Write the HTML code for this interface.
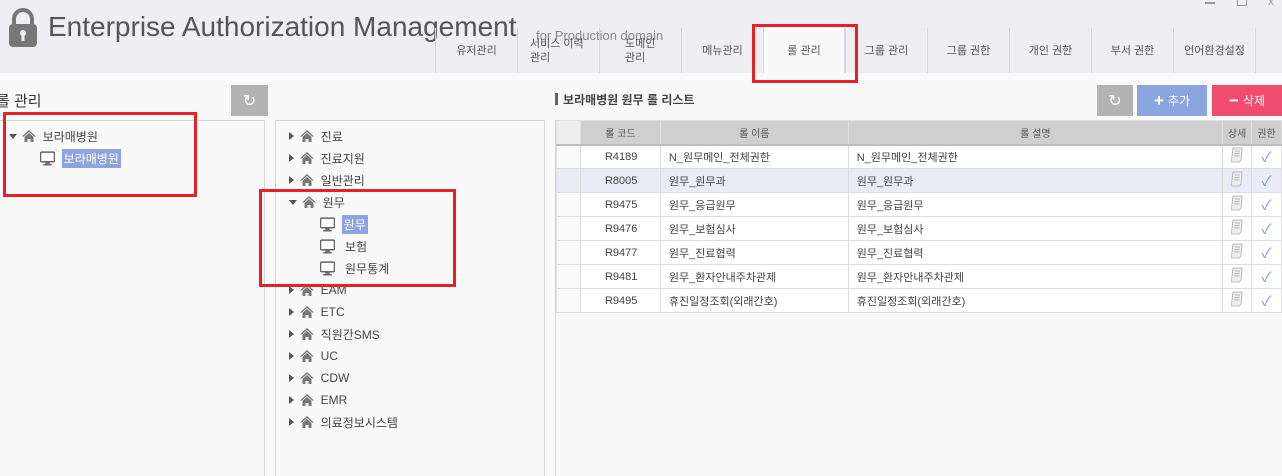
<!DOCTYPE html>
<html><head><meta charset="utf-8"><style>
*{box-sizing:border-box;margin:0;padding:0}
body{width:1282px;height:476px;overflow:hidden;background:#f9f9f9;font-family:"Liberation Sans","Noto Sans CJK KR",sans-serif;color:#333;position:relative;font-size:12px}
.abs{position:absolute}
#hdr{left:0;top:0;width:1282px;height:73px;background:#efeef2}
.title{left:48px;top:11px;font-size:28px;color:#555;white-space:nowrap;transform:scaleX(1.0);transform-origin:left}
.sub{left:536px;top:28px;font-size:13px;color:#888;white-space:nowrap}
.tab{top:28px;height:45px;width:82px;border-left:1px solid #d8d8dc;font-size:11px;color:#555;display:flex;align-items:center;justify-content:center;text-align:center;line-height:14px}
.red{border:3px solid #e8202a}
.btn{height:31px;color:#fff;font-size:12px;display:flex;align-items:center;justify-content:center}
.vline{background:#d5d5d5;width:1px}
.tree{font-size:12px;color:#444;white-space:nowrap;height:20px;display:flex;align-items:center}
.tri{display:inline-block;width:0;height:0;border-left:5px solid #555;border-top:4px solid transparent;border-bottom:4px solid transparent;margin-right:6px}
.trid{display:inline-block;width:0;height:0;border-top:5px solid #555;border-left:4px solid transparent;border-right:4px solid transparent;margin-right:5px}
.sel{background:#8fa3e2;color:#fff;padding:1px 2px}
table{border-collapse:collapse;font-size:11px;color:#444}
td,th{height:24px;border:1px solid #ddd;white-space:nowrap}
th{background:#cfcfcf;font-weight:normal;color:#555;border-color:#e0e0e0;border-bottom:2px solid #bdbdbd;font-size:10px}
td{background:#fff;padding-left:8px}
tr.hl td{background:#e9ebf6}
.ck{color:#7a94e0;text-align:center;padding:0;font-size:14px}
.doc{padding:0;text-align:center}
</style></head><body>
<div id="hdr" class="abs"></div>
<svg class="abs" style="left:8px;top:8px" width="30" height="40" viewBox="0 0 30 40"><path d="M6 17 V11 A9 9 0 0 1 24 11 V17" fill="none" stroke="#777" stroke-width="4"/><rect x="1" y="16" width="28" height="23" rx="4" fill="#777"/><circle cx="15" cy="25" r="3" fill="#efeef2"/><rect x="13.5" y="26" width="3" height="7" fill="#efeef2"/></svg>
<div class="abs title">Enterprise Authorization Management</div>
<div class="abs sub">for Production domain</div>
<div class="abs" style="left:1205px;top:0;width:10px;height:4px;border-bottom:2px solid #999"></div>
<div class="abs" style="left:1237px;top:-4px;width:10px;height:10px;border:1px solid #999"></div>
<div class="abs" style="left:1268px;top:-6px;color:#999;font-size:12px">x</div>
<div class="abs tab" style="left:435px">유저관리</div>
<div class="abs tab" style="left:517px;justify-content:flex-start;padding-left:12px;text-align:left">서비스 이력<br>관리</div>
<div class="abs tab" style="left:599px;justify-content:flex-start;padding-left:25px;text-align:left">도메인<br>관리</div>
<div class="abs tab" style="left:681px">메뉴관리</div>
<div class="abs tab" style="left:763px;background:#f9f9f9;border-right:1px solid #d8d8dc">롤 관리</div>
<div class="abs tab" style="left:845px">그룹 관리</div>
<div class="abs tab" style="left:927px">그룹 권한</div>
<div class="abs tab" style="left:1009px">개인 권한</div>
<div class="abs tab" style="left:1091px">부서 권한</div>
<div class="abs tab" style="left:1173px">언어환경설정</div>
<div class="abs tab" style="left:1255px"></div>
<div class="abs red" style="left:752px;top:24px;width:106px;height:59px"></div>

<div class="abs" style="left:-4px;top:90px;font-size:15px;color:#333">롤 관리</div>
<div class="abs btn" style="left:231px;top:85px;width:37px;background:#b3b3b3;font-size:16px">↻</div>
<div class="abs" style="left:0;top:120px;width:264px;height:1px;background:#d5d5d5"></div>
<div class="abs vline" style="left:264px;top:120px;height:356px"></div>
<div class="abs vline" style="left:275px;top:120px;height:356px"></div>
<div class="abs" style="left:275px;top:120px;width:270px;height:1px;background:#d5d5d5"></div>
<div class="abs vline" style="left:544px;top:120px;height:356px"></div>
<div class="abs vline" style="left:555px;top:120px;height:356px"></div>

<svg width="0" height="0" style="position:absolute"><defs>
<symbol id="h" viewBox="0 0 14 14"><path d="M7 1 L0 7.5 L2 7.5 L7 3 L12 7.5 L14 7.5Z M2.5 8 L7 4 L11.5 8 V13 H8.5 V10 H5.5 V13 H2.5Z" fill="#777"/></symbol>
<symbol id="m" viewBox="0 0 14 14"><rect x="0.5" y="1" width="13" height="9" rx="1" fill="#fff" stroke="#666" stroke-width="1.4"/><rect x="5" y="10" width="4" height="2" fill="#666"/><rect x="3" y="12" width="8" height="1.5" fill="#666"/></symbol>
<symbol id="d" viewBox="0 0 14 16"><path d="M3 1 H12 L11 13 Q10 15 8 15 H2 Q1 15 1.5 13 Z" fill="#eee" stroke="#bbb"/><path d="M4.5 4 H10 M4.3 6.5 H9.8 M4 9 H9.5" stroke="#bbb"/></symbol>
</defs></svg>

<div class="abs tree" style="left:9px;top:126px"><span class="trid"></span><svg width="14" height="14"><use href="#h"/></svg>&nbsp;&nbsp;보라매병원</div>
<div class="abs tree" style="left:40px;top:148px"><svg width="15" height="15"><use href="#m"/></svg>&nbsp;&nbsp;<span class="sel">보라매병원</span></div>
<div class="abs red" style="left:3px;top:112px;width:194px;height:85px"></div>

<div class="abs" style="left:289px;top:125px">
<div class="tree" style="height:22px"><span class="tri"></span><svg width="14" height="14"><use href="#h"/></svg>&nbsp;&nbsp;진료</div>
<div class="tree" style="height:22px"><span class="tri"></span><svg width="14" height="14"><use href="#h"/></svg>&nbsp;&nbsp;진료지원</div>
<div class="tree" style="height:22px"><span class="tri"></span><svg width="14" height="14"><use href="#h"/></svg>&nbsp;&nbsp;일반관리</div>
<div class="tree" style="height:22px"><span class="trid"></span><svg width="14" height="14"><use href="#h"/></svg>&nbsp;&nbsp;원무</div>
<div class="tree" style="height:22px;padding-left:31px"><svg width="15" height="15"><use href="#m"/></svg>&nbsp;&nbsp;<span class="sel">원무</span></div>
<div class="tree" style="height:22px;padding-left:31px"><svg width="15" height="15"><use href="#m"/></svg>&nbsp;&nbsp;&nbsp;보험</div>
<div class="tree" style="height:22px;padding-left:31px"><svg width="15" height="15"><use href="#m"/></svg>&nbsp;&nbsp;&nbsp;원무통계</div>
<div class="tree" style="height:22px"><span class="tri"></span><svg width="14" height="14"><use href="#h"/></svg>&nbsp;&nbsp;EAM</div>
<div class="tree" style="height:22px"><span class="tri"></span><svg width="14" height="14"><use href="#h"/></svg>&nbsp;&nbsp;ETC</div>
<div class="tree" style="height:22px"><span class="tri"></span><svg width="14" height="14"><use href="#h"/></svg>&nbsp;&nbsp;직원간SMS</div>
<div class="tree" style="height:22px"><span class="tri"></span><svg width="14" height="14"><use href="#h"/></svg>&nbsp;&nbsp;UC</div>
<div class="tree" style="height:22px"><span class="tri"></span><svg width="14" height="14"><use href="#h"/></svg>&nbsp;&nbsp;CDW</div>
<div class="tree" style="height:22px"><span class="tri"></span><svg width="14" height="14"><use href="#h"/></svg>&nbsp;&nbsp;EMR</div>
<div class="tree" style="height:22px"><span class="tri"></span><svg width="14" height="14"><use href="#h"/></svg>&nbsp;&nbsp;의료정보시스템</div>
</div>
<div class="abs red" style="left:259px;top:189px;width:197px;height:98px"></div>

<div class="abs" style="left:555px;top:93px;width:3px;height:12px;background:#666"></div>
<div class="abs" style="left:563px;top:91px;font-size:12px;font-weight:bold;color:#444">보라매병원 원무 롤 리스트</div>
<div class="abs btn" style="left:1097px;top:85px;width:36px;background:#b3b3b3;font-size:16px">↻</div>
<div class="abs btn" style="left:1137px;top:85px;width:70px;background:#8ca4e0"><b style="font-size:17px;margin-right:4px">+</b>추가</div>
<div class="abs btn" style="left:1212px;top:85px;width:70px;background:#f04c6e"><b style="font-size:17px;margin-right:4px">−</b>삭제</div>

<table class="abs" style="left:556px;top:120px;width:726px">
<tr><th style="width:24px;background:#eee"></th><th style="width:80px">롤 코드</th><th style="width:188px">롤 이름</th><th style="width:375px">롤 설명</th><th style="width:29px">상세</th><th style="width:30px">권한</th></tr>
<tr><td style="background:#fafafa"></td><td style="padding-left:24px">R4189</td><td>N_원무메인_전체권한</td><td>N_원무메인_전체권한</td><td class="doc"><svg width="14" height="16"><use href="#d"/></svg></td><td class="ck">✓</td></tr>
<tr class="hl"><td></td><td style="padding-left:24px">R8005</td><td>원무_원무과</td><td>원무_원무과</td><td class="doc"><svg width="14" height="16"><use href="#d"/></svg></td><td class="ck">✓</td></tr>
<tr><td style="background:#fafafa"></td><td style="padding-left:24px">R9475</td><td>원무_응급원무</td><td>원무_응급원무</td><td class="doc"><svg width="14" height="16"><use href="#d"/></svg></td><td class="ck">✓</td></tr>
<tr><td style="background:#fafafa"></td><td style="padding-left:24px">R9476</td><td>원무_보험심사</td><td>원무_보험심사</td><td class="doc"><svg width="14" height="16"><use href="#d"/></svg></td><td class="ck">✓</td></tr>
<tr><td style="background:#fafafa"></td><td style="padding-left:24px">R9477</td><td>원무_진료협력</td><td>원무_진료협력</td><td class="doc"><svg width="14" height="16"><use href="#d"/></svg></td><td class="ck">✓</td></tr>
<tr><td style="background:#fafafa"></td><td style="padding-left:24px">R9481</td><td>원무_환자안내주차관제</td><td>원무_환자안내주차관제</td><td class="doc"><svg width="14" height="16"><use href="#d"/></svg></td><td class="ck">✓</td></tr>
<tr><td style="background:#fafafa"></td><td style="padding-left:24px">R9495</td><td>휴진일정조회(외래간호)</td><td>휴진일정조회(외래간호)</td><td class="doc"><svg width="14" height="16"><use href="#d"/></svg></td><td class="ck">✓</td></tr>
</table>
</body></html>
